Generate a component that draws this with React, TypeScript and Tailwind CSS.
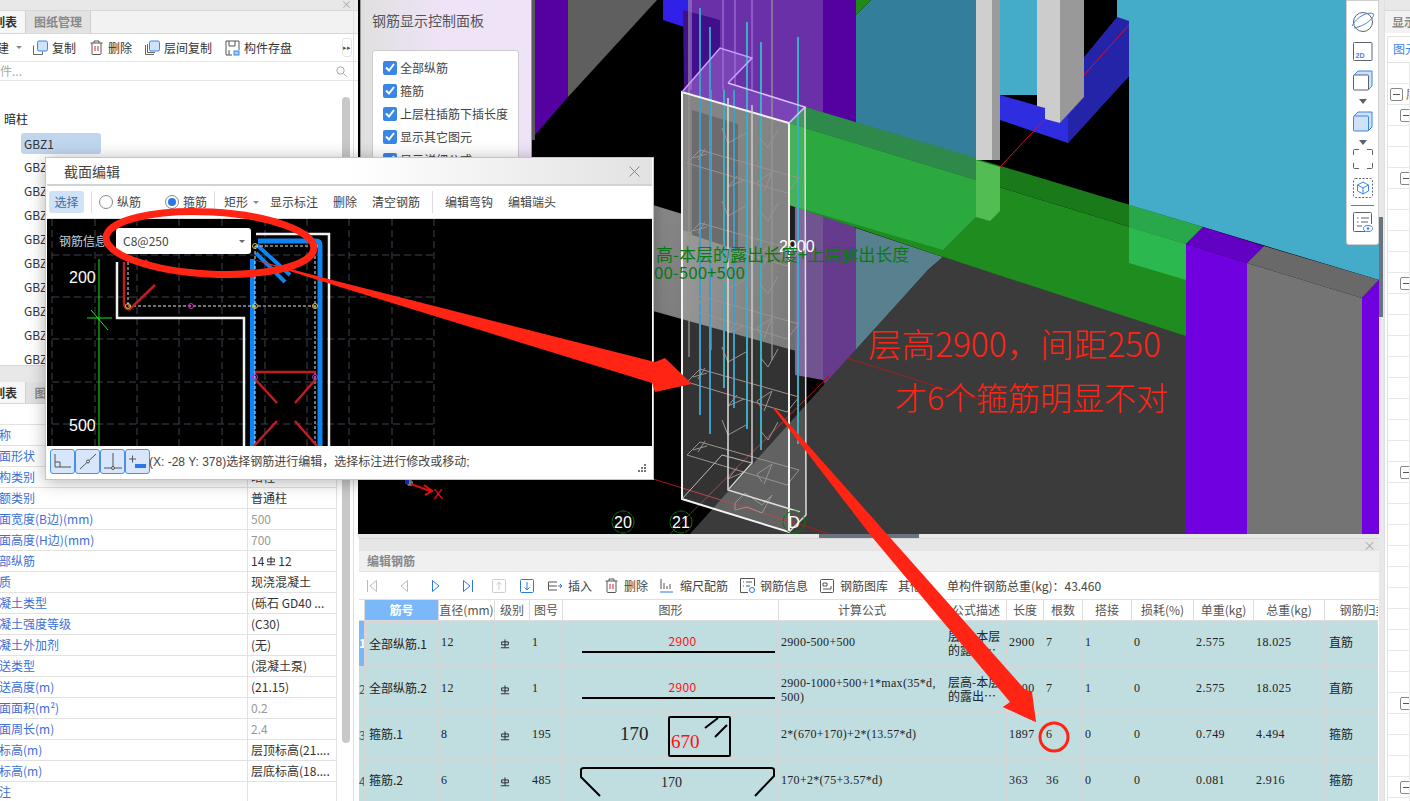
import React from "react";

const S = "[font-family:'Liberation_Serif','Noto_Sans_CJK_SC',serif]";

function Bar({ x1, y1, x2, y2, c = "#555", w = 1 }: { x1: number; y1: number; x2: number; y2: number; c?: string; w?: number }) {
  return <line x1={x1} y1={y1} x2={x2} y2={y2} stroke={c} strokeWidth={w} />;
}

function CopyIcon({ layered }: { layered?: boolean }) {
  return (
    <svg width="16" height="16" viewBox="0 0 16 16" className="shrink-0" fill="none">
      {layered && <path d="M1.5 5v9.5H10" stroke="#666" />}
      <path d={layered ? "M3.5 4v8.5H11" : "M1.5 5.5v9h9v-3"} stroke="#666" />
      <rect x="5.5" y="1" width="10" height="10" rx="1.5" fill="#cfe2fa" stroke="#3a85e8" />
    </svg>
  );
}
function TrashIcon() {
  return (
    <svg width="13" height="15" viewBox="0 0 13 15" className="shrink-0" fill="none" stroke="#555">
      <path d="M.5 3h12M4 3V1h5v2M2 3v10.5a1 1 0 0 0 1 1h7a1 1 0 0 0 1-1V3" />
      <path d="M5 6v5M8 6v5" stroke="#e02020" />
    </svg>
  );
}
function SaveIcon() {
  return (
    <svg width="15" height="16" viewBox="0 0 15 16" className="shrink-0" fill="none" stroke="#555">
      <path d="M7 15H1V1h13v9" />
      <path d="M4 1v5h6V1M4 15v-5" />
      <rect x="9" y="11" width="5" height="4" fill="#a9cdf6" stroke="#3a85e8" />
    </svg>
  );
}
function Cb({ label }: { label: string }) {
  return (
    <div className="flex items-center h-[23px] pl-[10px] shrink-0">
      <span className="w-[14px] h-[14px] rounded-[2px] bg-[#3a85e8] flex items-center justify-center shrink-0">
        <svg width="10" height="9" viewBox="0 0 10 9" fill="none" stroke="white" strokeWidth="2">
          <path d="M1 4.5 4 7.5 9 1" />
        </svg>
      </span>
      <span className="ml-[3px] text-[12px] text-[#444] whitespace-nowrap">{label}</span>
    </div>
  );
}
function Grade({ size = 12 }: { size?: number }) {
  return (
    <svg width={size} height={size} viewBox="0 0 12 12" fill="none" stroke="#111" className="inline-block shrink-0">
      <path d="M6 .5V10M2 3.5h8v3.5H2zM1 10.5h10" />
    </svg>
  );
}

function LeftPanel() {
  const rows: [string, string, string?][] = [
    ["名称", ""],
    ["截面形状", ""],
    ["结构类别", "暗柱"],
    ["定额类别", "普通柱"],
    ["截面宽度(B边)(mm)", "500", "g"],
    ["截面高度(H边)(mm)", "700", "g"],
    ["全部纵筋", "14|12"],
    ["材质", "现浇混凝土"],
    ["混凝土类型", "(砾石 GD40 ..."],
    ["混凝土强度等级", "(C30)"],
    ["混凝土外加剂", "(无)"],
    ["泵送类型", "(混凝土泵)"],
    ["泵送高度(m)", "(21.15)"],
    ["截面面积(m²)", "0.2", "g"],
    ["截面周长(m)", "2.4", "g"],
    ["顶标高(m)", "层顶标高(21...."],
    ["底标高(m)", "层底标高(18...."],
    ["备注", ""],
  ];
  return (
    <div className="relative w-[358px] h-[801px] shrink-0 flex flex-col overflow-hidden bg-white text-[12px] text-[#333]">
      <div className="h-[365px] shrink-0 overflow-hidden flex flex-col relative">
        <div className="h-[11px] shrink-0 bg-[#e8e8e8] border-b border-[#d8d8d8] text-right pr-[6px] text-[#aaa] text-[11px] leading-[9px]">×</div>
        <div className="h-[23px] shrink-0 flex bg-[#f2f2f2] border-b border-[#d8d8d8]">
          <div className="w-[26px] overflow-hidden bg-[#f7f7f7] border-r border-[#d0d0d0] font-bold leading-[22px] whitespace-nowrap"><span className="ml-[-31px] inline-block text-[12px]">构件列表</span></div>
          <div className="w-[65px] bg-[#e2e2e2] border-r border-[#d0d0d0] text-center font-bold text-[#888] leading-[22px]">图纸管理</div>
        </div>
        <div className="h-[28px] shrink-0 flex items-center border-b border-[#e5e5e5] whitespace-nowrap">
          <span className="ml-[-15px] shrink-0">新建</span>
          <span className="ml-[7px] w-0 h-0 border-x-[3px] border-x-transparent border-t-[3px] border-t-[#888] shrink-0" />
          <span className="ml-[10px] flex items-center gap-[4px] shrink-0"><CopyIcon />复制</span>
          <span className="ml-[14px] flex items-center gap-[5px] shrink-0"><TrashIcon />删除</span>
          <span className="ml-[12px] flex items-center gap-[4px] shrink-0"><CopyIcon layered />层间复制</span>
          <span className="ml-[13px] flex items-center gap-[4px] shrink-0"><SaveIcon />构件存盘</span>
          <span className="ml-[50px] w-[10px] h-[19px] border border-[#e5e5e5] rounded-[3px] text-[7px] leading-[17px] text-center text-[#555] shrink-0">▸▸</span>
        </div>
        <div className="h-[19px] shrink-0 flex items-center border-b border-[#e5e5e5] relative">
          <span className="ml-[-36px] text-[#aaa] whitespace-nowrap">查找构件...</span>
          <svg width="11" height="11" viewBox="0 0 11 11" fill="none" stroke="#aaa" className="absolute left-[336px] top-[4px]"><circle cx="4.5" cy="4.5" r="3.7" /><path d="m7.5 7.5 3 3" /></svg>
        </div>
        <div className="mt-[26px] h-[24px] pl-[4px] flex items-center shrink-0 text-[#222]">暗柱</div>
        <div className="h-[24px] shrink-0 flex items-center">
          <span className="ml-[21px] w-[80px] h-[21px] bg-[#c0d6ef] rounded-[3px] pl-[3px] leading-[21px] text-[#333]">GBZ1</span>
        </div>
        {[2, 3, 4, 5, 6, 7, 8, 9, 10].map((n) => (
          <div key={n} className="h-[24px] shrink-0 flex items-center pl-[24px]">GBZ{n}</div>
        ))}
        <div className="absolute left-[342px] top-[97px] w-[8px] h-[262px] rounded-[4px] bg-[#c8c8c8]" />
      </div>
      <div className="flex-1 flex flex-col min-h-0 relative border-t border-[#d8d8d8]">
        <div className="h-[16px] shrink-0 bg-[#e8e8e8]" />
        <div className="h-[22px] shrink-0 flex bg-[#f2f2f2] border-b border-[#d8d8d8]">
          <div className="w-[26px] overflow-hidden bg-[#f7f7f7] border-r border-[#d0d0d0] font-bold leading-[21px] whitespace-nowrap"><span className="ml-[-31px] inline-block">属性列表</span></div>
          <div className="w-[65px] bg-[#e2e2e2] text-center font-bold text-[#888] leading-[21px]">图层管理</div>
        </div>
        <div className="h-[20px] shrink-0" />
        <div className="w-[337px] flex flex-col">
          {rows.map(([k, v, g]) => (
            <div key={k} className="h-[21px] shrink-0 flex border-t border-[#e2e2e2] border-r">
              <div className="w-[248px] shrink-0 overflow-hidden whitespace-nowrap text-[#3a6fd8] leading-[20px] border-r border-[#e2e2e2]"><span className="ml-[-13px] inline-block">{k}</span></div>
              <div className={"pl-[3px] leading-[20px] whitespace-nowrap overflow-hidden " + (g ? "text-[#999]" : "text-[#333]")}>
                {v === "14|12" ? (<span className="flex items-center gap-[2px]">14<Grade size={10} />12</span>) : v}
              </div>
            </div>
          ))}
        </div>
        <div className="absolute left-[342px] top-[38px] w-[8px] h-[339px] rounded-[4px] bg-[#c8c8c8]" />
      </div>
      <div className="absolute right-[4px] top-0 bottom-0 w-px bg-[#e0e0e0]" />
    </div>
  );
}

function Scene() {
  const levels = [0, -73, -146, -219, -292];
  return (
    <svg width="1021" height="534" viewBox="358 0 1021 534" className="block">
      <defs>
        <linearGradient id="band" x1="0" y1="0" x2="1" y2="0.2">
          <stop offset="0" stopColor="#8c8c8c" />
          <stop offset="1" stopColor="#5c5c5c" />
        </linearGradient>
      </defs>
      <rect x="358" y="0" width="1021" height="534" fill="#000" />
      {/* left background wall */}
      <rect x="531" y="0" width="4" height="140" fill="#5a5a5a" />
      <polygon points="535,0 568,0 568,97 535,135" fill="#5500a0" />
      <polygon points="568,0 657,0 568,97" fill="#5f5f5f" />
      {/* grey beam */}
      <polygon points="653,205 800,250 800,352 653,311" fill="url(#band)" />
      {/* top blue */}
      <polygon points="663,0 663,20 760,52 790,52 790,0" fill="#3020e8" />
      {/* purple volumes */}
      <polygon points="690,0 823,0 823,117 805,107 789,123 682,92 690,82" fill="#6a30a8" />
      <polygon points="683,10 720,20 720,48 684,90" fill="#40108a" />
      <polygon points="823,0 856,0 856,128 823,118" fill="#5500a0" />
      <polygon points="795,200 823,210 823,380 795,375" fill="#705490" />
      <polygon points="823,210 856,228 856,350 825,385 823,380" fill="#663a8c" />
      {/* teal wall */}
      <polygon points="856,15 871,0 976,0 976,180 856,130" fill="#337f9b" />
      <polygon points="856,0 871,0 856,15" fill="#1f8a1a" />
      <polygon points="856,228 943,257 928,270 856,350" fill="#58808f" />
      {/* ground */}
      <polygon points="928,270 943,257 1186,335 1186,534 690,534 848,358" fill="#3b3b3b" />
      {/* green beam */}
      <polygon points="789,123 1186,244 1186,336 943,257 789,205" fill="#1e8c1e" />
      <polygon points="805,107 1203,227 1186,244 789,123" fill="#1a7a1a" />
      <polygon points="789,123 976,180 976,217 943,250 789,205" fill="#2ba83e" />
      <polygon points="805,107 976,158 976,180 789,123" fill="#2d8a4a" />
      {/* pillar 1 */}
      <rect x="976" y="0" width="16" height="160" fill="#cfcfcf" />
      <rect x="992" y="0" width="8" height="160" fill="#9b9b9b" />
      <polygon points="976,160 1000,167 1000,211 990,221 976,217" fill="#52bd52" />
      {/* cyan + blue behind pillar 2 */}
      <rect x="1000" y="0" width="37" height="95" fill="#44acc9" />
      <polygon points="1000,95 1045,108 1060,123 1084,97 1084,57 1117,17 1129,21 1129,76 1068,143 1000,120" fill="#2e2ee0" />
      <polygon points="1084,57 1117,17 1129,21 1129,76 1068,143 1068,116 1084,97" fill="#2424a8" />
      <polygon points="1037,0 1060,0 1060,123 1045,119 1045,108 1037,106" fill="#cccccc" />
      <polygon points="1060,0 1084,0 1084,97 1060,123" fill="#999" />
      <polygon points="1117,0 1084,0 1084,57 1117,17" fill="#000" />
      {/* big cyan */}
      <polygon points="1117,0 1379,0 1379,280 1203,227 1129,205 1129,21 1117,17" fill="#44acc9" />
      <polygon points="1129,205 1203,227 1186,244 1129,227" fill="#28a84a" />
      <polygon points="1129,227 1186,244 1186,280 1129,263" fill="#2bb84e" />
      {/* end columns */}
      <polygon points="1186,244 1203,227 1264,246 1247,263" fill="#6200c4" />
      <polygon points="1186,244 1247,263 1247,534 1186,534" fill="#7000e0" />
      <polygon points="1247,263 1264,246 1379,280 1362,298" fill="#696969" />
      <polygon points="1247,263 1362,298 1362,534 1247,534" fill="#747474" />
      <polygon points="1362,298 1379,280 1379,534 1362,534" fill="#7000e0" />
      {/* red axis lines */}
      <Bar x1={1000} y1={167} x2={1045} y2={119} c="#e0102a" />
      <Bar x1={1084} y1={75} x2={1129} y2={25} c="#e0102a" />
      <Bar x1={847} y1={358} x2={1005} y2={408} c="#a02020" />
      <Bar x1={650} y1={478} x2={830} y2={534} c="#b01818" />
      <Bar x1={670} y1={534} x2={830} y2={375} c="#a01818" />
      {/* column box */}
      <polygon points="682,92 789,123 789,260 682,230" fill="#666" />
      <polygon points="692,110 738,124 738,250 692,235" fill="#484848" />
      <polygon points="682,92 789,123 789,532 682,499" fill="#fff" opacity="0.2" />
      <polygon points="789,123 805,107 806,515 789,532" fill="#fff" opacity="0.12" />
      <polygon points="682,92 720,48 752,58 728,83 805,107 789,123" fill="#c8a0ff" opacity="0.18" />
      {/* rebars */}
      <g strokeWidth="1.5" opacity="0.85">
        {[[689, 0, 357], [691, 0, 90], [723, 0, 90], [735, 0, 86], [711, 90, 350], [772, 0, 360], [752, 0, 90]].map(([x, a, b], i) => (
          <line key={i} x1={x} y1={a} x2={x} y2={b} stroke={a === 0 && b < 100 ? "#a070d8" : "#9a9490"} />
        ))}
      </g>
      <g strokeWidth="2">
        {[[700, 8, 415], [710, 27, 434], [724, 90, 388], [734, 90, 408], [747, 22, 429], [761, 42, 450], [798, 37, 444]].map(([x, a, b], i) => (
          <line key={i} x1={x} y1={a} x2={x} y2={b} stroke={i === 0 || i === 1 || i === 3 ? "#3aa0c8" : "#38b0c4"} />
        ))}
      </g>
      {/* stirrups */}
      <g fill="none" stroke="#9a9490" strokeWidth="1">
        {levels.map((d) => (
          <g key={d} transform={`translate(0 ${d})`}>
            <path d="M687 455 700 442 799 470 787 485Z" />
            <path d="M693 450 707 446M698 452 705 441" />
            <path d="M737 468 728 479 744 472M762 482 757 474 772 464 764 484" />
            <path d="M722 420 728 435 746 425M760 430 768 440 778 422" />
          </g>
        ))}
        <path d="M735 503 745 493 762 505 772 495 762 513 747 507 735 510Z" />
      </g>
      {/* wire frame */}
      <g stroke="#fff" fill="none">
        <path d="M682 92V499L789 532V123Z" strokeWidth="2" stroke="#f4f4f4" />
        <path d="M682 92 720 48 752 58 728 83" stroke="#c8a0ff" strokeWidth="1.5" />
        <path d="M728 83 805 107 789 123" stroke="#d8c0ff" strokeWidth="1.5" />
        <path d="M805 107 806 515 789 532" stroke="#ddd" strokeWidth="1.5" />
        <path d="M728 98V490L800 512" strokeWidth="1.5" stroke="#ddd" />
        <path d="M752 105V463L728 490" strokeWidth="1.5" stroke="#ccc" />
        <path d="M682 499 722 455 752 463" strokeWidth="1" stroke="#bbb" />
      </g>
      {/* labels */}
      <text x="779" y="252" fill="#fff" fontSize="16" fontFamily="'Liberation Sans',sans-serif">2900</text>
      <text x="656" y="261" fill="#0a7a14" fontSize="17" fontFamily="'Noto Sans CJK SC',sans-serif">高-本层的露出长度+上层露出长度</text>
      <text x="654" y="279" fill="#0a7a14" fontSize="17" fontFamily="'Noto Sans CJK SC',sans-serif">00-500+500</text>
      {/* axis */}
      <circle cx="410" cy="483" r="3" fill="#888" />
      <rect x="405" y="480" width="4" height="4" fill="#1a30e0" />
      <path d="M408 479 417 477" stroke="#18a018" strokeWidth="2" />
      <path d="M411 484 430 491M424 485 432 491 425 495" stroke="#ee1010" strokeWidth="2" fill="none" />
      <text x="433" y="499" fill="#ee1010" fontSize="15" fontFamily="'Liberation Sans',sans-serif">X</text>
      {[[623, "20"], [681, "21"], [794, "D"]].map(([x, t]) => (
        <g key={t as string}>
          <circle cx={x as number} cy={522} r="11" fill="none" stroke="#0a7a0a" strokeDasharray="6 1" />
          <text x={x as number} y={528} textAnchor="middle" fill="#fff" fontSize="16" fontFamily="'Liberation Sans',sans-serif">{t}</text>
        </g>
      ))}
    </svg>
  );
}

function RightTools() {
  return (
    <div className="absolute left-[988px] top-0 w-[33px] h-[245px] bg-white border border-[#d0d0d0] rounded-b-[3px] flex flex-col items-center">
      <svg width="24" height="22" viewBox="0 0 24 22" fill="none" stroke="#5a6270" className="mt-[10px] shrink-0">
        <circle cx="12" cy="11" r="9.5" />
        <path d="M1 15C6 5 18 0 22.5 3 24 6 15 15 3 17" stroke="#3a85e8" />
      </svg>
      <svg width="20" height="20" viewBox="0 0 20 20" fill="none" className="mt-[9px] shrink-0">
        <rect x=".5" y=".5" width="18.5" height="18" rx="1" stroke="#5a6270" />
        <text x="2.5" y="16" fontSize="7" fontWeight="700" fill="#3a85e8" fontFamily="'Liberation Sans',sans-serif">2D</text>
      </svg>
      <svg width="20" height="21" viewBox="0 0 20 21" fill="none" className="mt-[8px] shrink-0">
        <path d="M1 5 5 1h14v15l-4 4" stroke="#3a85e8" fill="#d0e2fa" />
        <rect x=".5" y="5" width="15" height="15" rx="1" fill="white" stroke="#5a6270" />
      </svg>
      <span className="mt-[8px] w-0 h-0 border-x-[4px] border-x-transparent border-t-[5px] border-t-[#5a6270] shrink-0" />
      <svg width="20" height="21" viewBox="0 0 20 21" fill="none" className="mt-[7px] shrink-0" stroke="#3a85e8">
        <path d="M1 5 5 1h14v15l-4 4" fill="#d0e2fa" />
        <rect x=".5" y="5" width="15" height="15" rx="1" fill="#d0e2fa" />
      </svg>
      <span className="mt-[8px] w-0 h-0 border-x-[4px] border-x-transparent border-t-[5px] border-t-[#5a6270] shrink-0" />
      <svg width="20" height="20" viewBox="0 0 20 20" fill="none" stroke="#5a6270" className="mt-[4px] shrink-0">
        <path d="M.5 6V1.5a1 1 0 0 1 1-1H6M14 .5h4.5a1 1 0 0 1 1 1V6M19.5 14v4.5a1 1 0 0 1-1 1H14M6 19.5H1.5a1 1 0 0 1-1-1V14" />
      </svg>
      <svg width="20" height="20" viewBox="0 0 20 20" fill="none" className="mt-[9px] shrink-0">
        <rect x=".5" y=".5" width="19" height="19" rx="2" stroke="#5a6270" strokeDasharray="2 1.5" />
        <path d="M10 4 15.5 7v6L10 16 4.5 13V7ZM4.5 7 10 10l5.5-3M10 10v6" stroke="#3a85e8" />
      </svg>
      <div className="mt-[7px] w-[23px] h-px bg-[#777] shrink-0" />
      <svg width="20" height="20" viewBox="0 0 20 20" fill="none" className="mt-[6px] shrink-0">
        <path d="M12 19.5H1.5a1 1 0 0 1-1-1V1.5a1 1 0 0 1 1-1h16a1 1 0 0 1 1 1V12" stroke="#5a6270" />
        <path d="M4 6h1.5M8 6h8M4 10h1.5M8 10h7M4 14h5" stroke="#5a6270" />
        <ellipse cx="15" cy="16.5" rx="4.5" ry="3" fill="white" stroke="#3a85e8" />
        <circle cx="15" cy="16.5" r="1.3" fill="#3a85e8" />
      </svg>
    </div>
  );
}

const colWidths = "grid-cols-[6px_74px_56px_35px_33px_216px_167px_61px_37px_39px_49px_62px_60px_71px_78px]";
const gridCell = "border-r border-b border-[#d6d6d6] overflow-hidden";

function Straight() {
  return (
    <div className="relative h-full flex flex-col items-center">
      <span className="mt-[13px] ml-[24px] text-[12px] text-[#ff1010] leading-[13px] tracking-[0.4px]">2900</span>
      <span className="mt-[4px] ml-[15px] w-[193px] h-[2px] bg-black" />
    </div>
  );
}
function Hoop1() {
  return (
    <svg width="216" height="46" viewBox="0 0 216 46" className="block">
      <text x="57" y="27" fontSize="19" fill="#222" fontFamily="'Liberation Serif',serif">170</text>
      <rect x="106" y="4" width="61" height="39" fill="none" stroke="#000" strokeWidth="2" rx="1" />
      <path d="M142 15 155 5M152 24 164 12" stroke="#000" strokeWidth="2" />
      <text x="108" y="35" fontSize="19" fill="#ff1010" fontFamily="'Liberation Serif',serif">670</text>
    </svg>
  );
}
function Hoop2() {
  return (
    <svg width="216" height="46" viewBox="0 0 216 46" className="block">
      <path d="M37 37 18 18V11q0-2 3-2H208q3 0 3 2v6L192 37" fill="none" stroke="#000" strokeWidth="2" />
      <text x="98" y="28" fontSize="14" fill="#222" fontFamily="'Liberation Serif',serif">170</text>
    </svg>
  );
}

function RebarTable() {
  const head = ["", "筋号", "直径(mm)", "级别", "图号", "图形", "计算公式", "公式描述", "长度", "根数", "搭接", "损耗(%)", "单重(kg)", "总重(kg)", "钢筋归类"];
  const rows: any[] = [
    ["1", "全部纵筋.1", "12", "1", <Straight />, "2900-500+500", "层高-本层的露出…", "2900", "7", "1", "0", "2.575", "18.025", "直筋"],
    ["2", "全部纵筋.2", "12", "1", <Straight />, "2900-1000+500+1*max(35*d, 500)", "层高-本层的露出…", "2900", "7", "1", "0", "2.575", "18.025", "直筋"],
    ["3", "箍筋.1", "8", "195", <Hoop1 />, "2*(670+170)+2*(13.57*d)", "", "1897", "6", "0", "0", "0.749", "4.494", "箍筋"],
    ["4", "箍筋.2", "6", "485", <Hoop2 />, "170+2*(75+3.57*d)", "", "363", "36", "0", "0", "0.081", "2.916", "箍筋"],
  ];
  return (
    <div className={"grid " + colWidths + " text-[12px] w-[1019px] overflow-hidden grid-rows-[21px_46px_46px_46px_46px]"}>
      {head.map((h, i) => (
        <div key={i} className={"text-center leading-[20px] whitespace-nowrap border-r border-b border-[#dcdcdc] overflow-hidden " + (i === 1 ? "bg-[#7ab8fa] text-white font-bold" : "bg-white text-[#555]")}>{h}</div>
      ))}
      {rows.map((r, ri) => {
        const [n, name, d, fig, shape, formula, desc, len, cnt, lap, loss, uw, tw, cat] = r;
        const cls = gridCell + " bg-[#c0dde0] text-[#222]";
        const num = S + " pl-[2px] leading-[42px] whitespace-nowrap tracking-[0.4px]";
        return (
          <React.Fragment key={n}>
            <div className={gridCell + " text-[12px] leading-[44px] text-center " + (ri === 0 ? "bg-[#7ab8fa] text-white font-bold" : "bg-[#c0dde0] text-[#555]")}>{n}</div>
            <div className={cls + " leading-[42px] whitespace-nowrap " + (ri === 0 ? "border-2 border-[#808080] pl-[2px]" : "pl-[4px]")}>{name}</div>
            <div className={cls + " " + num}>{d}</div>
            <div className={cls + " flex items-center justify-start pl-[5px]"}><Grade size={10} /></div>
            <div className={cls + " " + num}>{fig}</div>
            <div className={cls}>{shape}</div>
            <div className={cls + " " + S + " pl-[2px] text-[12px] tracking-[0.3px] " + (formula.length > 25 ? "pt-[9px] leading-[14px]" : "leading-[42px] whitespace-nowrap")}>{formula}</div>
            <div className={cls + " pl-[2px] pt-[8px] leading-[14px] text-[12px]"}>{desc}</div>
            <div className={cls + " " + num}>{len}</div>
            <div className={cls + " " + num}>{cnt}</div>
            <div className={cls + " " + num}>{lap}</div>
            <div className={cls + " " + num}>{loss}</div>
            <div className={cls + " " + num}>{uw}</div>
            <div className={cls + " " + num}>{tw}</div>
            <div className={cls + " pl-[4px] leading-[42px] whitespace-nowrap"}>{cat}</div>
          </React.Fragment>
        );
      })}
    </div>
  );
}

function Box({ up, c }: { up?: boolean; c: string }) {
  return (
    <svg width="14" height="14" viewBox="0 0 14 14" fill="none" stroke={c} className="shrink-0">
      <rect x=".5" y=".5" width="13" height="13" rx="1" />
      <path d={up ? "M7 11V3M4.5 5.5 7 3l2.5 2.5" : "M7 3v8M4.5 8.5 7 11l2.5-2.5"} />
    </svg>
  );
}

function EditPanel() {
  const nav = "shrink-0";
  return (
    <div className="flex-1 min-h-0 ml-px overflow-hidden flex flex-col text-[12px] text-[#444]">
      <div className="h-[12px] shrink-0 bg-[#e6e6e6] text-right pr-[3px] text-[#aaa] text-[13px] leading-[11px] border-t border-[#d8d8d8]">×</div>
      <div className="h-[22px] shrink-0 bg-[#f0f0f0] border-y border-[#e2e2e2] pl-[8px] leading-[19px] text-[#888] font-bold">编辑钢筋</div>
      <div className="h-[28px] shrink-0 flex items-center whitespace-nowrap border-b border-[#e0e0e0]">
        <svg width="10" height="12" viewBox="0 0 10 12" fill="none" stroke="#bbb" className={"ml-[8px] " + nav}><path d="M.5 0v12M9.5.5 3 6l6.5 5.5Z" /></svg>
        <svg width="8" height="12" viewBox="0 0 8 12" fill="none" stroke="#bbb" className={"ml-[23px] " + nav}><path d="M7.5.5 1 6l6.5 5.5Z" /></svg>
        <svg width="8" height="12" viewBox="0 0 8 12" fill="none" stroke="#2a78e4" className={"ml-[24px] " + nav}><path d="M.5.5 7 6 .5 11.5Z" /></svg>
        <svg width="10" height="12" viewBox="0 0 10 12" fill="none" stroke="#2a78e4" className={"ml-[23px] " + nav}><path d="M.5.5 7 6 .5 11.5ZM9.5 0v12" /></svg>
        <span className="ml-[19px] shrink-0 flex"><Box up c="#ccc" /></span>
        <span className="ml-[14px] shrink-0 flex"><Box c="#2a78e4" /></span>
        <svg width="14" height="12" viewBox="0 0 14 12" fill="none" stroke="#555" className="ml-[14px] shrink-0"><path d="M9 2H.5v8H9M1 6h8" /><path d="M10 6h3.5M12 4l2 2-2 2" stroke="#2a78e4" /></svg>
        <span className="ml-[6px] shrink-0">插入</span>
        <span className="ml-[13px] shrink-0 flex"><TrashIcon /></span>
        <span className="ml-[6px] shrink-0">删除</span>
        <svg width="13" height="14" viewBox="0 0 13 14" fill="none" stroke="#555" className="ml-[12px] shrink-0"><path d="M1 0v10M4 4v6M7 7v3M10 5v5" /><path d="M0 13h13" stroke="#2a78e4" /></svg>
        <span className="ml-[7px] shrink-0">缩尺配筋</span>
        <svg width="15" height="15" viewBox="0 0 15 15" fill="none" stroke="#555" className="ml-[12px] shrink-0"><path d="M8 14.5H.5V.5h14V8M3 4h1M6 4h6M3 8h1M6 8h4" /><circle cx="12" cy="12" r="2.5" stroke="#2a78e4" /></svg>
        <span className="ml-[5px] shrink-0">钢筋信息</span>
        <svg width="14" height="14" viewBox="0 0 14 14" fill="none" stroke="#555" className="ml-[12px] shrink-0"><rect x=".5" y=".5" width="13" height="13" rx="1" /><path d="M3 4h4v3H3zM3 10h8V7" /></svg>
        <span className="ml-[6px] shrink-0">钢筋图库</span>
        <span className="ml-[10px] shrink-0">其他</span>
        <span className="ml-[4px] w-0 h-0 border-x-[3px] border-x-transparent border-t-[3px] border-t-[#888] shrink-0" />
        <span className="ml-[15px] shrink-0">单构件钢筋总重(kg)：43.460</span>
      </div>
      <RebarTable />
    </div>
  );
}

function RightPanel() {
  const boxes: Record<number, number> = { 1: 4, 2: 14, 5: 14, 10: 14, 19: 14, 30: 14, 34: 14 };
  return (
    <div className="w-[31px] h-[801px] shrink-0 flex bg-white overflow-hidden text-[12px]">
      <div className="w-[5px] shrink-0 flex flex-col bg-[#e8e8e8]">
        <div className="h-[217px] shrink-0" />
        <div className="h-[100px] shrink-0 bg-[#6a7480] w-[4px]" />
      </div>
      <div className="flex-1 min-w-0 flex flex-col border-l border-[#e0e0e0]">
        <div className="h-[11px] shrink-0 bg-[#e8e8e8] border-b border-[#d8d8d8]" />
        <div className="h-[22px] shrink-0 bg-[#f2f2f2] pl-[7px] text-[#888] font-bold leading-[22px] whitespace-nowrap">显示设置</div>
        <div className="h-[29px] shrink-0 flex items-end pl-[2px]">
          <div className="h-[26px] w-[40px] shrink-0 border border-b-0 border-[#e0e0e0] rounded-t-[3px] pl-[5px] leading-[24px] text-[#3a85e8] whitespace-nowrap">图元</div>
        </div>
        <div className="ml-[2px] flex flex-col border-l border-t border-[#e2e2e2]">
          {Array.from({ length: 36 }).map((_, i) => (
            <div key={i} className="h-[21px] shrink-0 border-b border-[#e8e8e8] relative flex items-center">
              <span className="absolute left-[21px] top-0 bottom-0 w-px bg-[#e8e8e8]" />
              {boxes[i] !== undefined && (
                <span className={"w-[13px] h-[13px] shrink-0 border border-[#888] rounded-[2px] bg-white flex items-center justify-center " + (i === 1 ? "ml-[2px]" : "ml-[12px]")}>
                  <span className="w-[7px] h-px bg-[#555]" />
                </span>
              )}
              {i === 1 && <span className="ml-[3px] text-[#b05a10] whitespace-nowrap">层</span>}
            </div>
          ))}
        </div>
      </div>
    </div>
  );
}

function Dialog() {
  const rb = "shrink-0 whitespace-nowrap";
  return (
    <div className="absolute left-[45px] top-[157px] w-[609px] h-[323px] bg-white border border-[#c4c4c4] shadow-[0_2px_16px_rgba(0,0,0,0.3)] flex flex-col px-px text-[12px] text-[#444]">
      <div className="h-[28px] shrink-0 flex items-center justify-between bg-gradient-to-r from-white via-white to-[#e2e2e2] pl-[17px] pr-[12px] border-b-2 border-[#d0d4d8]">
        <span className="text-[14px] text-[#444]">截面编辑</span>
        <svg width="11" height="11" viewBox="0 0 11 11" stroke="#888"><path d="M.5.5l10 10M10.5.5l-10 10" /></svg>
      </div>
      <div className="h-[33px] shrink-0 flex items-center bg-white border-b border-[#ddd]">
        <span className={"ml-[2px] w-[35px] h-[22px] bg-[#cfe2f8] rounded-[3px] text-center leading-[22px] text-[#3a6ea5] " + rb}>选择</span>
        <span className="ml-[7px] w-px h-[22px] bg-[#ddd] shrink-0" />
        <span className="ml-[7px] w-[14px] h-[14px] rounded-full border border-[#888] shrink-0" />
        <span className={"ml-[4px] " + rb}>纵筋</span>
        <span className="ml-[24px] w-[14px] h-[14px] rounded-full border border-[#888] shrink-0 flex items-center justify-center"><span className="w-[8px] h-[8px] rounded-full bg-[#2a78e4]" /></span>
        <span className={"ml-[4px] " + rb}>箍筋</span>
        <span className="ml-[7px] w-px h-[22px] bg-[#ddd] shrink-0" />
        <span className={"ml-[9px] " + rb}>矩形</span>
        <span className="ml-[5px] w-0 h-0 border-x-[3px] border-x-transparent border-t-[3px] border-t-[#888] shrink-0" />
        <span className={"ml-[11px] " + rb}>显示标注</span>
        <span className={"ml-[15px] " + rb}>删除</span>
        <span className={"ml-[15px] " + rb}>清空钢筋</span>
        <span className="ml-[12px] w-px h-[22px] bg-[#ddd] shrink-0" />
        <span className={"ml-[12px] " + rb}>编辑弯钩</span>
        <span className={"ml-[15px] " + rb}>编辑端头</span>
      </div>
      <div className="h-[227px] shrink-0 relative bg-black overflow-hidden">
        <svg width="606" height="227" viewBox="47 219 606 227" className="block">
          <g stroke="#3d4250" strokeDasharray="7 4" fill="none">
            {[255, 297, 339, 382, 424].map((y) => <line key={y} x1="52" x2="434" y1={y} y2={y} />)}
            {[52, 95, 137, 179, 222, 265, 307, 349, 392, 434].map((x) => <line key={x} x1={x} x2={x} y1="219" y2="446" />)}
          </g>
          <path d="M117 262V318H244V446M256 234H329V446" fill="none" stroke="#f0f0f0" strokeWidth="2.5" />
          <path d="M252.5 446V259M320 446V245Q320 241 316 241H258" fill="none" stroke="#0d84f0" strokeWidth="5" />
          <path d="M257 245 290 275M256 253 285 282" stroke="#0d84f0" strokeWidth="4" />
          <path d="M128 306H316M255 246H316M128 262V306M255 246V446M315 246V446" stroke="#dfe6ef" strokeDasharray="3 2" fill="none" />
          <path d="M124 262V304Q125 310 130 309L155 285M145 260 155 268" fill="none" stroke="#c01c24" strokeWidth="2.5" />
          <path d="M255 372H316M255 379 277 403M316 379 295 403M277 421 254 446M295 421 317 446" fill="none" stroke="#c01c24" strokeWidth="2.5" />
          {[[128, 306, "#e8c020"], [255, 306, "#e8c020"], [315, 306, "#e8c020"], [315, 246, "#e8c020"], [255, 246, "#e8c020"], [191, 306, "#e020d0"], [255, 377, "#e020d0"], [315, 377, "#e020d0"]].map(([x, y, c], i) => (
            <rect key={i} x={(x as number) - 2.5} y={(y as number) - 2.5} width="5" height="5" rx="2.5" fill="none" stroke={c as string} />
          ))}
          <path d="M99 259V446M87 318H112M91 310 108 330" stroke="#1ee01e" fill="none" />
          <text x="69" y="283" fill="#fff" fontSize="16" fontFamily="'Liberation Sans',sans-serif">200</text>
          <text x="69" y="431" fill="#fff" fontSize="16" fontFamily="'Liberation Sans',sans-serif">500</text>
        </svg>
        <div className="absolute left-[12px] top-[9px] h-[26px] flex items-center">
          <span className="text-[#bcd4e8] whitespace-nowrap w-[57px]">钢筋信息</span>
          <div className="w-[135px] h-[26px] bg-white rounded-[3px] flex items-center justify-between pl-[7px] pr-[6px] text-[#444]">
            <span>C8@250</span>
            <span className="w-0 h-0 border-x-[3px] border-x-transparent border-t-[3px] border-t-[#666]" />
          </div>
        </div>
      </div>
      <div className="h-[31px] shrink-0 bg-white flex items-center pl-[3px] relative whitespace-nowrap">
        {[
          <path key="a" d="M4 4v13h16M4 12h5v5" />,
          <g key="b"><path d="M4 19 20 4" /><circle cx="12" cy="11.5" r="1.5" fill="#d7e6fa" /></g>,
          <g key="c"><path d="M12 3v15M3 18h18" /><circle cx="12" cy="18" r="1.5" fill="#d7e6fa" /></g>,
          <g key="d"><path d="M3 9h7M6.5 5.5v7" /><rect x="9" y="14" width="11" height="4" fill="#2a78e4" stroke="none" /></g>,
        ].map((p, i) => (
          <span key={i} className="w-[25px] h-[25px] shrink-0 bg-[#d7e6fa] border border-[#4a90e8] rounded-[3px] flex items-center justify-center">
            <svg width="23" height="23" viewBox="0 0 23 23" fill="none" stroke="#555">{p}</svg>
          </span>
        ))}
        <span className="ml-[-1px] shrink-0 [font-family:'Liberation_Sans','Noto_Sans_CJK_SC',sans-serif] text-[12px]">(X: -28 Y: 378)选择钢筋进行编辑，选择标注进行修改或移动;</span>
        <svg width="10" height="10" viewBox="0 0 10 10" className="absolute right-[5px] bottom-[3px]" fill="#777">
          <rect x="7" y="0" width="2" height="2" /><rect x="4" y="3" width="2" height="2" /><rect x="7" y="3" width="2" height="2" /><rect x="1" y="6" width="2" height="2" /><rect x="4" y="6" width="2" height="2" /><rect x="7" y="6" width="2" height="2" />
        </svg>
      </div>
    </div>
  );
}

function ControlPanel() {
  return (
    <div className="absolute left-[2px] top-0 w-[172px] h-[165px] bg-gradient-to-r from-[#e0e0e0] via-[#efe3f8] to-[#efe3f8] border border-[#999] border-t-0 flex flex-col">
      <div className="h-[50px] shrink-0 pl-[11px] pt-[10px] text-[14px] text-[#555] leading-[20px] whitespace-nowrap">钢筋显示控制面板</div>
      <div className="ml-[11px] w-[147px] flex-1 bg-white border border-[#ccc] rounded-[3px] pt-[5px] flex flex-col">
        <Cb label="全部纵筋" />
        <Cb label="箍筋" />
        <Cb label="上层柱插筋下插长度" />
        <Cb label="显示其它图元" />
        <Cb label="显示详细公式" />
      </div>
    </div>
  );
}

function Annotations() {
  const red = "#ff2414";
  return (
    <>
      <svg width="1410" height="801" viewBox="0 0 1410 801" className="absolute left-0 top-0 pointer-events-none">
        <ellipse cx="210" cy="243" rx="104" ry="31" fill="none" stroke={red} strokeWidth="7" transform="rotate(3 210 243)" />
        <polygon points="252,259 340,282 655,362 665,358 692,384 655,392 652,383 340,287" fill={red} />
        <polygon points="772,407 776,409 886,533 1027,692 1020,690 1036,722 1003,707 1010,702 872,537" fill={red} />
        <polygon points="1022,688 1032,692 1036,722 1003,707 1012,702" fill={red} />
        <circle cx="1054" cy="737" r="14" fill="none" stroke={red} strokeWidth="3" />
      </svg>
      <div className="absolute left-[868px] top-[321px] text-[33.5px] leading-[44px] text-[#ff2414] whitespace-nowrap pointer-events-none font-light">层高2900，间距250</div>
      <div className="absolute left-[895px] top-[374px] text-[32px] leading-[44px] text-[#ff2414] whitespace-nowrap pointer-events-none font-light">才6个箍筋明显不对</div>
    </>
  );
}

export default function App() {
  return (
    <div className="relative w-[1410px] h-[801px] overflow-hidden bg-white flex [font-family:'Noto_Sans_CJK_SC',sans-serif]">
      <LeftPanel />
      <div className="w-[1021px] h-[801px] shrink-0 flex flex-col">
        <div className="h-[534px] shrink-0 relative overflow-hidden">
          <Scene />
          <ControlPanel />
          <RightTools />
        </div>
        <div className="h-[4px] shrink-0 bg-[#e8e8e8]"><div className="mx-auto w-[100px] h-[4px] bg-[#6a7480]" /></div>
        <EditPanel />
      </div>
      <RightPanel />
      <Dialog />
      <Annotations />
    </div>
  );
}
